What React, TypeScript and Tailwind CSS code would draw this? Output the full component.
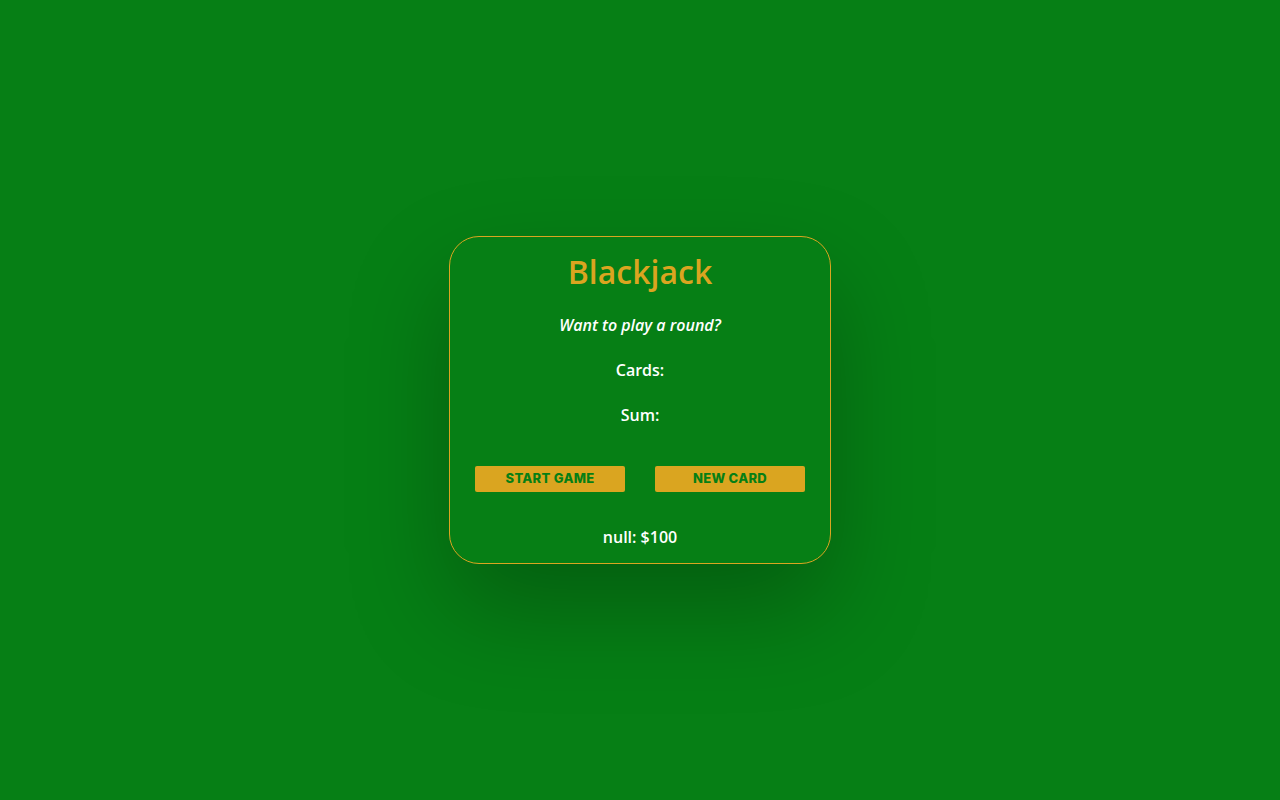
import React from 'react';

const App: React.FC = () => {
  const message = 'Want to play a round?';
  const player = { name: null as string | null, chips: 100 };

  return (
    <div className="flex h-screen w-full items-center justify-center bg-[#067f15] font-['Open_Sans',sans-serif] text-white">
      <div className="flex w-[382px] flex-col items-center rounded-[30px] border border-[#daa520] bg-[#067f15] px-[25px] pt-[15px] pb-[14px] shadow-[0_45px_100px_rgba(0,0,0,0.26)]">
        <h1 className="text-[32px] leading-[40px] font-semibold text-[#daa520]">Blackjack</h1>
        <p className="mt-[21px] text-base leading-6 font-semibold italic">{message}</p>
        <p className="mt-[21px] text-base leading-6 font-semibold">Cards:</p>
        <p className="mt-[21px] text-base leading-6 font-semibold">Sum:</p>
        <div className="mt-[39px] flex w-full justify-between">
          <button className="h-[26px] w-[150px] rounded-[2px] bg-[#daa520] font-['Inter',sans-serif] text-[13px] font-extrabold tracking-[0.3px] text-[#067f15] uppercase">
            Start Game
          </button>
          <button className="h-[26px] w-[150px] rounded-[2px] bg-[#daa520] font-['Inter',sans-serif] text-[13px] font-extrabold tracking-[0.3px] text-[#067f15] uppercase">
            New Card
          </button>
        </div>
        <p className="mt-[33px] text-base leading-6 font-semibold">
          {String(player.name)}: ${player.chips}
        </p>
      </div>
    </div>
  );
};

export default App;
